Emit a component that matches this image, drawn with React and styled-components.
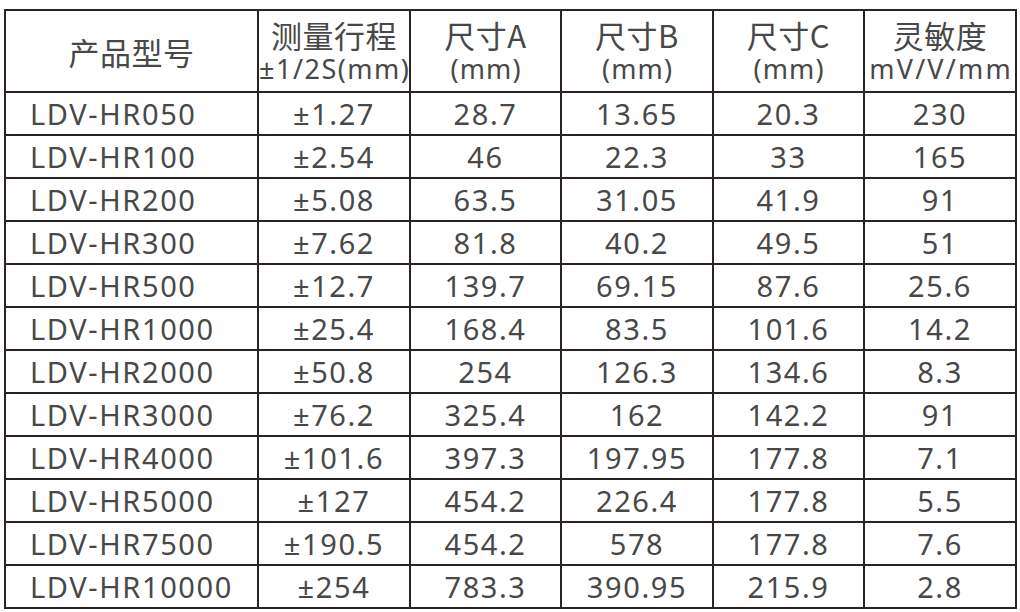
import React from "react";
import styled, { createGlobalStyle } from "styled-components";

const Global = createGlobalStyle`
  html, body { margin: 0; padding: 0; background: #ffffff; }
  body { font-family: "Noto Sans", "Noto Sans CJK SC", sans-serif; }
`;

const Page = styled.div`
  width: 1020px;
  height: 612px;
  box-sizing: border-box;
  padding: 9px 0 0 4px;
  background: #fff;
`;

const Table = styled.table`
  width: 1011px;
  border-collapse: collapse;
  table-layout: fixed;
  border: 2px solid #2b2321;
  color: #484848;
`;

const Th = styled.th`
  border: 2px solid #2b2321;
  height: 80px;
  padding: 0;
  font-weight: 400;
  text-align: center;
  vertical-align: middle;
  white-space: nowrap;
  overflow: hidden;
`;

const HeadLine = styled.div`
  font-family: "Noto Sans CJK SC", sans-serif;
  font-size: 31px;
  line-height: 35px;
  height: 35px;
  letter-spacing: 0.5px;
`;

const SubLine = styled.div`
  font-size: ${(p) => p.$size || 27}px;
  line-height: 33px;
  height: 33px;
  letter-spacing: ${(p) => p.$ls || 0}px;
  margin-right: ${(p) => -(p.$ls || 0)}px;
`;

const Td = styled.td`
  border: 2px solid #2b2321;
  height: 41px;
  padding: ${(p) => (p.$left ? "0 0 0 24px" : "0")};
  font-size: 29px;
  line-height: 41px;
  text-align: ${(p) => (p.$left ? "left" : "center")};
  white-space: nowrap;
  letter-spacing: 1.6px;
`;

const rows = [
  ["LDV-HR050", "±1.27", "28.7", "13.65", "20.3", "230"],
  ["LDV-HR100", "±2.54", "46", "22.3", "33", "165"],
  ["LDV-HR200", "±5.08", "63.5", "31.05", "41.9", "91"],
  ["LDV-HR300", "±7.62", "81.8", "40.2", "49.5", "51"],
  ["LDV-HR500", "±12.7", "139.7", "69.15", "87.6", "25.6"],
  ["LDV-HR1000", "±25.4", "168.4", "83.5", "101.6", "14.2"],
  ["LDV-HR2000", "±50.8", "254", "126.3", "134.6", "8.3"],
  ["LDV-HR3000", "±76.2", "325.4", "162", "142.2", "91"],
  ["LDV-HR4000", "±101.6", "397.3", "197.95", "177.8", "7.1"],
  ["LDV-HR5000", "±127", "454.2", "226.4", "177.8", "5.5"],
  ["LDV-HR7500", "±190.5", "454.2", "578", "177.8", "7.6"],
  ["LDV-HR10000", "±254", "783.3", "390.95", "215.9", "2.8"],
];

const widths = [253, 152, 151, 152, 151, 152];

export default function App() {
  return (
    <Page>
      <Global />
      <Table>
        <colgroup>
          {widths.map((w, i) => (
            <col key={i} style={{ width: w }} />
          ))}
        </colgroup>
        <thead>
          <tr>
            <Th>
              <HeadLine>产品型号</HeadLine>
            </Th>
            <Th>
              <HeadLine>测量行程</HeadLine>
              <SubLine $ls={1.5}>±1/2S(mm)</SubLine>
            </Th>
            <Th>
              <HeadLine>尺寸A</HeadLine>
              <SubLine $ls={1.1}>(mm)</SubLine>
            </Th>
            <Th>
              <HeadLine>尺寸B</HeadLine>
              <SubLine $ls={1.1}>(mm)</SubLine>
            </Th>
            <Th>
              <HeadLine>尺寸C</HeadLine>
              <SubLine $ls={1.1}>(mm)</SubLine>
            </Th>
            <Th>
              <HeadLine>灵敏度</HeadLine>
              <SubLine $ls={2.2}>mV/V/mm</SubLine>
            </Th>
          </tr>
        </thead>
        <tbody>
          {rows.map((r) => (
            <tr key={r[0]}>
              {r.map((c, i) => (
                <Td key={i} $left={i === 0}>
                  {c}
                </Td>
              ))}
            </tr>
          ))}
        </tbody>
      </Table>
    </Page>
  );
}
